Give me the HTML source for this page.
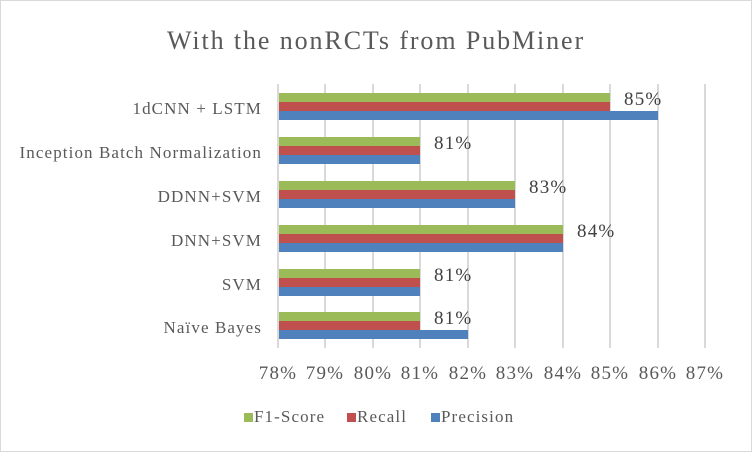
<!DOCTYPE html>
<html><head><style>
body{margin:0;width:752px;height:452px;overflow:hidden;background:#fff;font-family:"Liberation Serif",serif;color:#595959}
.frame{position:absolute;left:0;top:0;width:750px;height:450px;border:1px solid #d9d9d9}
.t{position:absolute;white-space:nowrap}
.g{position:absolute;top:84px;height:264px;width:2px;background:#d9d9d9}
.b{position:absolute;left:279px;height:9px}
.G{background:#9BBB59}.R{background:#C0504D}.B{background:#4F81BD}
.cat{position:absolute;right:490px;font-size:17px;letter-spacing:1.1px;text-align:right;white-space:nowrap}
.ax{position:absolute;top:363px;font-size:19px;letter-spacing:1.2px;width:70px;text-align:center;margin-left:-35px}
.dl{position:absolute;font-size:19px;letter-spacing:1.2px;color:#404040}
.lg{position:absolute;top:407px;font-size:17px;letter-spacing:1.1px;white-space:nowrap}
.sq{position:absolute;width:9px;height:9px;top:413px}
</style></head><body>
<div class="frame"></div>
<div class="t" style="left:0;width:752px;text-align:center;top:26px;font-size:26px;letter-spacing:1.9px">With the nonRCTs from PubMiner</div>
<div class="g" style="left:277px"></div><div class="g" style="left:324px"></div><div class="g" style="left:372px"></div><div class="g" style="left:419px"></div><div class="g" style="left:467px"></div><div class="g" style="left:514px"></div><div class="g" style="left:562px"></div><div class="g" style="left:609px"></div><div class="g" style="left:657px"></div><div class="g" style="left:704px"></div>

<div class="b G" style="top:93px;width:331px"></div><div class="b R" style="top:102px;width:331px"></div><div class="b B" style="top:111px;width:379px"></div>
<div class="b G" style="top:137px;width:141px"></div><div class="b R" style="top:146px;width:141px"></div><div class="b B" style="top:155px;width:141px"></div>
<div class="b G" style="top:181px;width:236px"></div><div class="b R" style="top:190px;width:236px"></div><div class="b B" style="top:199px;width:236px"></div>
<div class="b G" style="top:225px;width:284px"></div><div class="b R" style="top:234px;width:284px"></div><div class="b B" style="top:243px;width:284px"></div>
<div class="b G" style="top:269px;width:141px"></div><div class="b R" style="top:278px;width:141px"></div><div class="b B" style="top:287px;width:141px"></div>
<div class="b G" style="top:312px;width:141px"></div><div class="b R" style="top:321px;width:141px"></div><div class="b B" style="top:330px;width:189px"></div>

<div class="dl" style="left:624px;top:89px">85%</div>
<div class="dl" style="left:434px;top:133px">81%</div>
<div class="dl" style="left:529px;top:177px">83%</div>
<div class="dl" style="left:577px;top:221px">84%</div>
<div class="dl" style="left:434px;top:265px">81%</div>
<div class="dl" style="left:434px;top:308px">81%</div>

<div class="cat" style="top:99px">1dCNN + LSTM</div>
<div class="cat" style="top:143px">Inception Batch Normalization</div>
<div class="cat" style="top:187px">DDNN+SVM</div>
<div class="cat" style="top:231px">DNN+SVM</div>
<div class="cat" style="top:275px">SVM</div>
<div class="cat" style="top:318px">Naïve Bayes</div>

<div class="ax" style="left:278px">78%</div><div class="ax" style="left:325px">79%</div><div class="ax" style="left:373px">80%</div><div class="ax" style="left:420px">81%</div><div class="ax" style="left:468px">82%</div><div class="ax" style="left:515px">83%</div><div class="ax" style="left:563px">84%</div><div class="ax" style="left:610px">85%</div><div class="ax" style="left:658px">86%</div><div class="ax" style="left:705px">87%</div>

<div class="sq G" style="left:244px"></div><div class="lg" style="left:254px">F1-Score</div>
<div class="sq R" style="left:347px"></div><div class="lg" style="left:357px">Recall</div>
<div class="sq B" style="left:431px"></div><div class="lg" style="left:441px">Precision</div>
</body></html>
